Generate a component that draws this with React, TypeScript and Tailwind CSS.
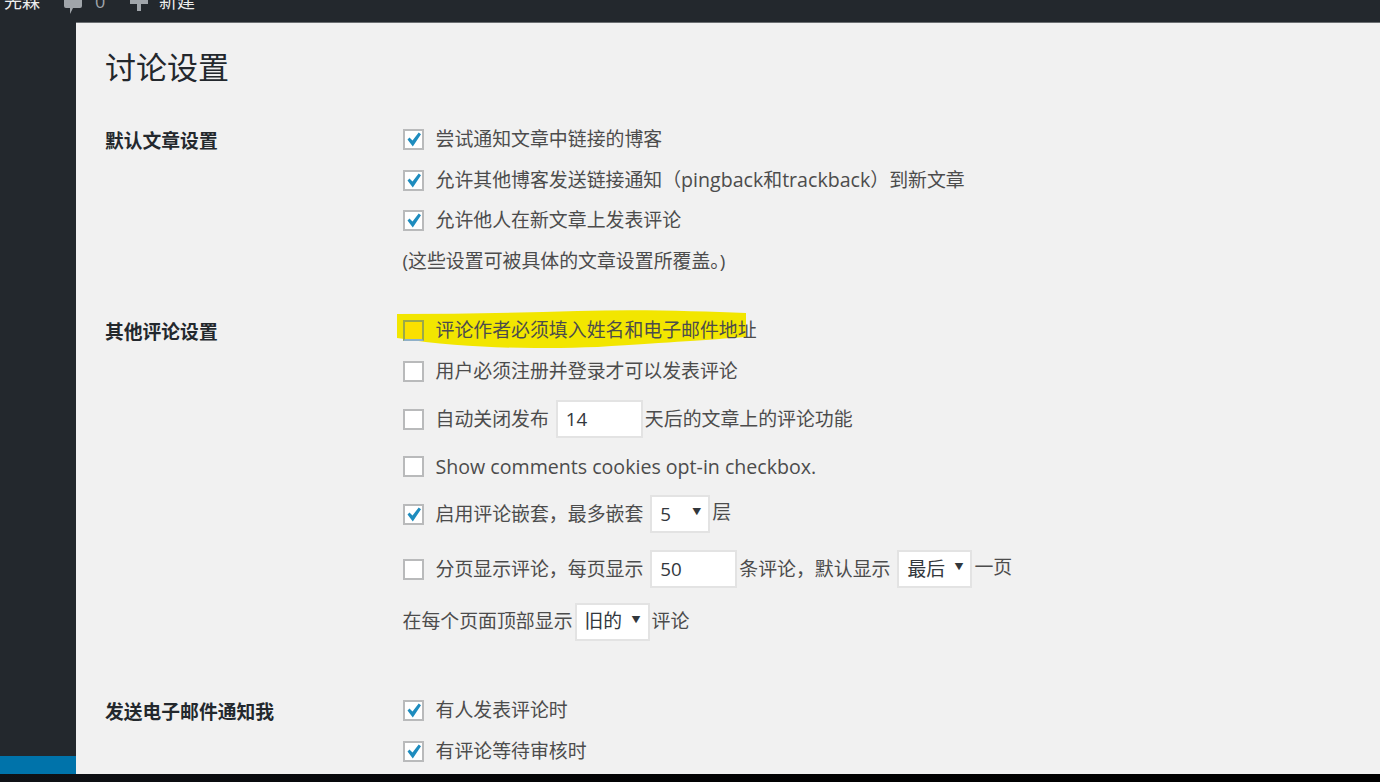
import { ReactNode } from 'react';

const font = { fontFamily: '"Open Sans", "Noto Sans CJK SC", sans-serif' };

function Box({ checked }: { checked?: boolean }) {
  return (
    <span className="relative mr-[12px] inline-block h-[21px] w-[21px] shrink-0 border-2 border-[#b9babb] bg-white">
      {checked ? (
        <svg viewBox="0 0 21 21" className="absolute -left-[2px] -top-[2px] h-[21px] w-[21px]">
          <path d="M4.5 10.5l2-2 3 3 6.2-8 2.3 1.8-8.2 12.2z" fill="#1e8cbe" />
        </svg>
      ) : null}
    </span>
  );
}

function Row({ h, children }: { h: number; children: ReactNode }) {
  return (
    <div className="flex items-center whitespace-nowrap" style={{ height: h }}>
      {children}
    </div>
  );
}

function Field({ w, value }: { w: string; value: string }) {
  return (
    <span className={`ml-[7px] mr-[2px] flex h-[38px] items-center border-2 border-[#e3e3e3] bg-white pl-[8px] text-[18.8px] text-[#32373c] ${w}`}>
      {value}
    </span>
  );
}

function Drop({ w, value, ml }: { w: string; value: string; ml: string }) {
  return (
    <span className={`mr-[2px] flex h-[38px] items-center justify-between border-2 border-[#e3e3e3] bg-white pl-[8px] pr-[7px] text-[18.8px] text-[#32373c] ${w} ${ml}`}>
      {value}
      <span className="-translate-y-[2px] text-[9px] text-[#32373c]">▼</span>
    </span>
  );
}

function Section({ title, top, children }: { title: string; top: string; children: ReactNode }) {
  return (
    <section className={`flex ${top}`}>
      <div className="w-[297.5px] shrink-0 pt-[4px] text-[18.8px] font-bold leading-[36px] text-[#23282d]">{title}</div>
      <div className="flex-1">{children}</div>
    </section>
  );
}

export default function App() {
  return (
    <div className="flex h-[782px] w-[1380px] flex-col overflow-hidden bg-[#f1f1f1] text-[18.9px] text-[#4c4c4c]" style={font}>
      <header className="flex h-[22px] shrink-0 items-end overflow-hidden bg-[#23282d] text-[18px] leading-[22px] text-[#eee]">
        <div className="flex h-[22px] items-center -translate-y-[10px]">
          <span className="w-[63px] pl-[4px]">先森</span>
          <svg viewBox="0 0 20 20" className="h-[20px] w-[20px] translate-y-[4px] text-[#a0a5aa]" fill="currentColor">
            <path d="M3 1h14a2 2 0 0 1 2 2v8a2 2 0 0 1-2 2H10l-3 6v-6H3a2 2 0 0 1-2-2V3a2 2 0 0 1 2-2z" />
          </svg>
          <span className="ml-[12px] w-[34px] text-[#a0a5aa]">0</span>
          <svg viewBox="0 0 20 20" className="h-[20px] w-[20px] translate-y-[1px] text-[#a0a5aa]" fill="currentColor">
            <path d="M8 1h4v7h7v4h-7v7H8v-7H1V8h7z" />
          </svg>
          <span className="ml-[10px]">新建</span>
        </div>
      </header>
      <div className="flex min-h-0 flex-1">
        <aside className="flex w-[76px] shrink-0 flex-col justify-end bg-[#23282d]">
          <div className="h-[18px] bg-[#0073aa]" />
        </aside>
        <main className="relative flex-1 overflow-hidden border-t border-[#6b6f72] pl-[29px]">
          <h1 className="mt-[19px] h-[50px] text-[31px] font-normal leading-[50px] text-[#23282d]">讨论设置</h1>
          <Section title="默认文章设置" top="mt-[27px]">
            <Row h={41}><Box checked />尝试通知文章中链接的博客</Row>
            <Row h={40}>
              <Box checked />允许其他博客发送链接通知（<span className="text-[19.6px]">pingback</span>和<span className="text-[19.6px]">trackback</span>）到新文章
            </Row>
            <Row h={41}><Box checked />允许他人在新文章上发表评论</Row>
            <Row h={40}>(这些设置可被具体的文章设置所覆盖。)</Row>
          </Section>
          <Section title="其他评论设置" top="mt-[29px]">
            <div className="relative">
              <svg viewBox="0 0 348 38" preserveAspectRatio="none" className="absolute left-[-6px] top-0 h-[38px] w-[349px]">
                <path d="M0 4C60 4 120 3 180 1c60-2 120 0 168 2v24c-40 3-70 5-148 10-60 2-130 2-200-9z" fill="#f2e600" />
              </svg>
              <div className="relative">
                <Row h={41}>
                  <span className="mr-[12px] inline-block h-[21px] w-[21px] shrink-0 border-2 border-[#9aa84a] border-b-[#8fb0c8] bg-[#fbe000]" />
                  评论作者必须填入姓名和电子邮件地址
                </Row>
              </div>
            </div>
            <Row h={41}><Box />用户必须注册并登录才可以发表评论</Row>
            <Row h={54}><Box />自动关闭发布<Field w="w-[87px]" value="14" />天后的文章上的评论功能</Row>
            <Row h={41}><Box /><span className="text-[19.6px]">Show comments cookies opt-in checkbox.</span></Row>
            <Row h={54}>
              <Box checked />启用评论嵌套，最多嵌套<Drop w="w-[60px]" value="5" ml="ml-[7px]" /><span className="-translate-y-[2px]">层</span>
            </Row>
            <Row h={56}>
              <Box />分页显示评论，每页显示<Field w="w-[87px]" value="50" />条评论，默认显示<Drop w="w-[75px]" value="最后" ml="ml-[7px]" /><span className="-translate-y-[2px]">一页</span>
            </Row>
            <Row h={49}>在每个页面顶部显示<Drop w="w-[75px]" value="旧的" ml="ml-[2px]" />评论</Row>
          </Section>
          <Section title="发送电子邮件通知我" top="mt-[44px]">
            <Row h={41}><Box checked />有人发表评论时</Row>
            <Row h={41}><Box checked />有评论等待审核时</Row>
          </Section>
        </main>
      </div>
      <div className="h-[8px] shrink-0 bg-gradient-to-r from-[#101216] to-[#000]" />
    </div>
  );
}
